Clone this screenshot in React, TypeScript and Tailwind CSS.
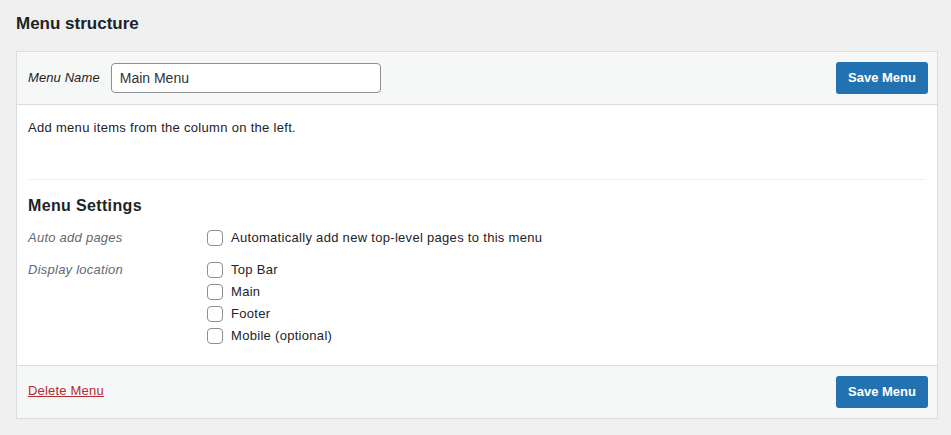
const locations = ['Top Bar', 'Main', 'Footer', 'Mobile (optional)'];

function Checkbox({ label }: { label: string }) {
  return (
    <label className="flex h-[22px] items-center gap-[8px] text-[13px] tracking-[0.3px] text-[#1d2327]">
      <input
        type="checkbox"
        className="h-4 w-4 appearance-none rounded-[4px] border border-[#8c8f94] bg-white"
      />
      <span>{label}</span>
    </label>
  );
}

function SaveButton() {
  return (
    <button className="h-8 w-[92px] rounded-[3px] bg-[#2271b1] text-[13px] font-semibold text-white">
      Save Menu
    </button>
  );
}

export default function App() {
  return (
    <div
      className="min-h-[435px] w-[951px] bg-[#f0f0f1] px-4 pt-[12px]"
      style={{ fontFamily: '"Liberation Sans", Arial, sans-serif' }}
    >
      <h2 className="text-[17px] leading-6 font-semibold text-[#1d2327]">
        Menu structure
      </h2>

      <div className="mt-[15px] w-[922px] border border-[#dcdcde] bg-white">
        <div className="flex h-[53px] items-center justify-between border-b border-[#dcdcde] bg-[#f6f7f7] pl-[11px] pr-[9px]">
          <div className="flex items-center gap-[11px]">
            <span className="text-[13px] italic tracking-[0.1px] text-[#1d2327]">Menu Name</span>
            <input
              type="text"
              defaultValue="Main Menu"
              className="h-[30px] w-[270px] rounded-[4px] border border-[#8c8f94] bg-white px-2 text-[14px] text-[#2c3338] outline-none"
            />
          </div>
          <SaveButton />
        </div>

        <div className="px-[11px] pb-[18px]">
          <p className="mt-[13px] text-[13px] leading-5 tracking-[0.3px] text-[#1d2327]">
            Add menu items from the column on the left.
          </p>

          <div className="mt-[41px] border-t border-[#f0f0f1]" />

          <h3 className="mt-[16px] text-[16px] leading-5 font-semibold tracking-[0.35px] text-[#1d2327]">
            Menu Settings
          </h3>

          <div className="mt-[11px] flex">
            <div className="w-[179px] text-[13px] leading-[22px] italic tracking-[0.25px] text-[#646970]">
              Auto add pages
            </div>
            <Checkbox label="Automatically add new top-level pages to this menu" />
          </div>

          <div className="mt-[10px] flex">
            <div className="w-[179px] text-[13px] leading-[22px] italic tracking-[0.25px] text-[#646970]">
              Display location
            </div>
            <div className="flex flex-col">
              {locations.map((loc) => (
                <Checkbox key={loc} label={loc} />
              ))}
            </div>
          </div>
        </div>

        <div className="flex h-[53px] items-center justify-between border-t border-[#dcdcde] bg-[#f6f7f7] pl-[11px] pr-[9px]">
          <a href="#" className="pb-[3px] text-[13px] tracking-[0.2px] text-[#b32d2e] underline">
            Delete Menu
          </a>
          <SaveButton />
        </div>
      </div>
    </div>
  );
}
